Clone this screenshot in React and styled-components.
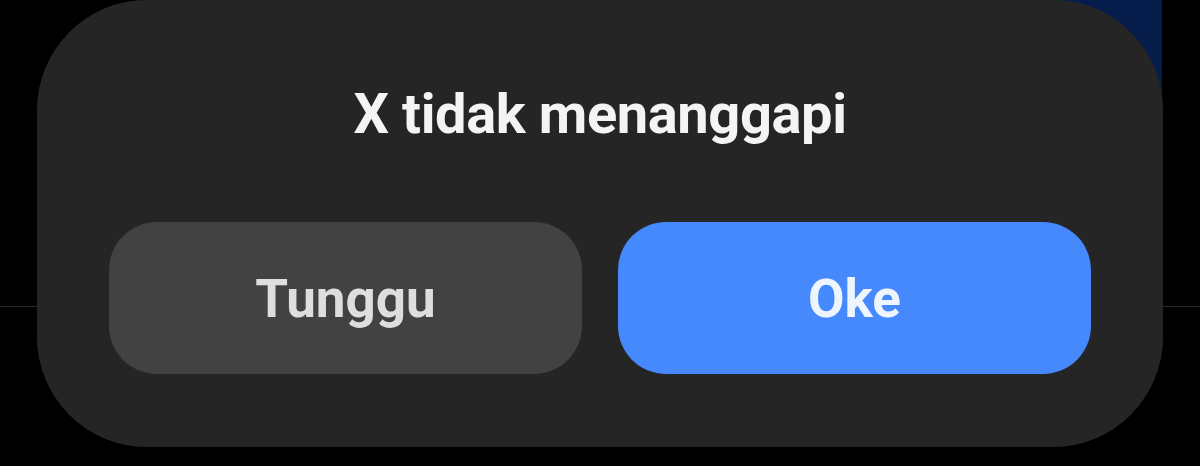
import React from "react";
import styled, { createGlobalStyle } from "styled-components";

const GlobalStyle = createGlobalStyle`
  html, body {
    margin: 0;
    padding: 0;
    background: #000;
    font-family: Roboto, "Noto Sans", "Liberation Sans", sans-serif;
  }
`;

const Screen = styled.div`
  position: relative;
  width: 1200px;
  height: 466px;
  overflow: hidden;
  background: #000;
`;

const Backdrop = styled.div`
  display: flex;
  flex-direction: column;
  height: 100%;
`;

const TopStrip = styled.div`
  display: flex;
  justify-content: flex-end;
  padding-right: 38px;
  height: 306px;
`;

const BluePanel = styled.div`
  width: 170px;
  height: 140px;
  background: #061d4c;
`;

const Divider = styled.div`
  height: 1px;
  background: #2a2a2a;
`;

const Dialog = styled.div`
  position: absolute;
  top: 0;
  left: 37px;
  width: 1126px;
  height: 447px;
  box-sizing: border-box;
  padding: 80px 72px 73px;
  background: #252525;
  border-radius: 110px;
  display: flex;
  flex-direction: column;
  align-items: stretch;
`;

const Title = styled.h1`
  margin: 0;
  font-size: 56px;
  line-height: 69px;
  font-weight: 700;
  letter-spacing: -0.4px;
  color: #f4f4f4;
  text-align: center;
`;

const Actions = styled.div`
  display: grid;
  grid-template-columns: 1fr 1fr;
  gap: 36px;
  margin-top: auto;
`;

const ActionButton = styled.button`
  height: 152px;
  border: none;
  border-radius: 48px;
  font-family: inherit;
  font-size: 53px;
  font-weight: 700;
  line-height: 1;
  padding-top: 3px;
  cursor: pointer;
  background: ${(p) => (p.$primary ? "#4689fc" : "#424242")};
  color: ${(p) => (p.$primary ? "#eef5ff" : "#dedede")};
`;

function App() {
  return (
    <>
      <GlobalStyle />
      <Screen>
        <Backdrop>
          <TopStrip>
            <BluePanel />
          </TopStrip>
          <Divider />
        </Backdrop>
        <Dialog role="dialog">
          <Title>X tidak menanggapi</Title>
          <Actions>
            <ActionButton>Tunggu</ActionButton>
            <ActionButton $primary>Oke</ActionButton>
          </Actions>
        </Dialog>
      </Screen>
    </>
  );
}

export default App;
